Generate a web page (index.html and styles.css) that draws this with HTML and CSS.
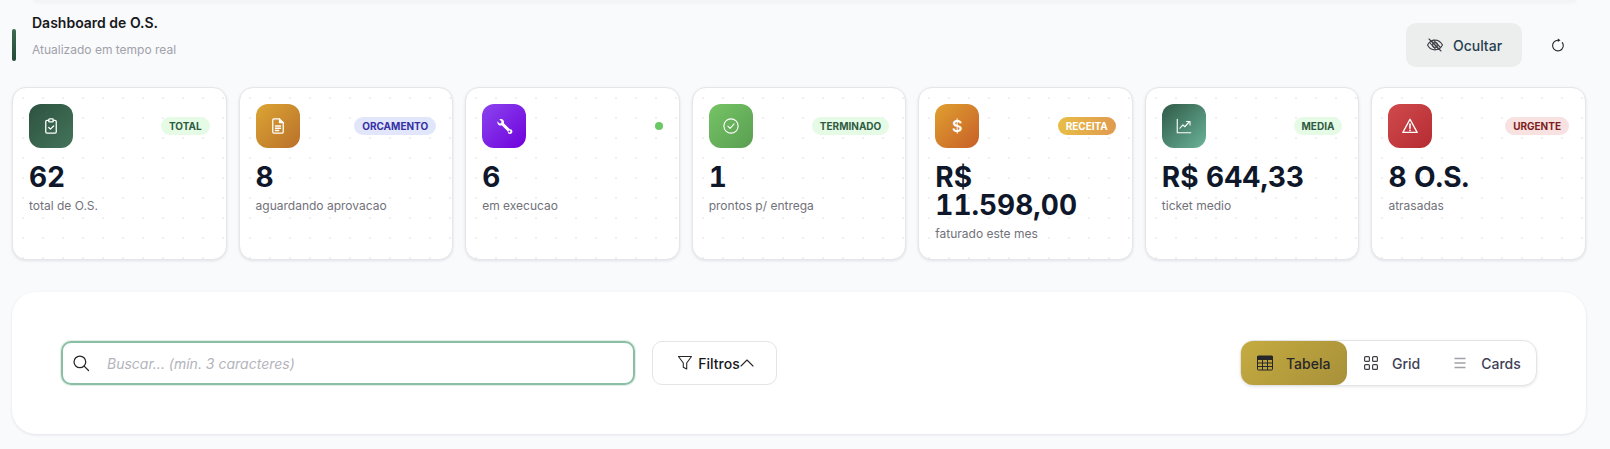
FILE: index.html
```html
<!DOCTYPE html>
<html lang="pt-BR">
<head>
<meta charset="utf-8">
<title>Dashboard de O.S.</title>
<link rel="stylesheet" href="styles.css">
</head>
<body>
<div class="topstrip"></div>
<main class="page">
  <header class="head">
    <div class="head-left">
      <span class="accent"></span>
      <div class="head-text">
        <h1>Dashboard de O.S.</h1>
        <p>Atualizado em tempo real</p>
      </div>
    </div>
    <div class="head-actions">
      <button class="btn-hide">
        <svg class="ico18" viewBox="0 0 24 24" fill="none" stroke="#3f3f46" stroke-width="1.5" stroke-linecap="round" stroke-linejoin="round"><path d="M2 12s3.600-6.500 10-6.500S22 12 22 12s-3.600 6.500-10 6.500S2 12 2 12z"/><circle cx="12" cy="12" r="3.200"/><path d="M4 4l16 16"/><path d="M7 6.500l10 11M10 5.500l9 9.500M5 9l8 9"/></svg>
        <span>Ocultar</span>
      </button>
      <button class="btn-refresh">
        <svg class="ico14" viewBox="0 0 14 14" fill="none" stroke="#27272a" stroke-width="1.100" stroke-linecap="round"><path d="M7 2.300A5.300 5.300 0 1 0 11.300 4.600"/><path d="M6.800.6l2.700 1.700-2.700 1.700z" fill="#27272a" stroke="none"/></svg>
      </button>
    </div>
  </header>

  <section class="cards">
    <article class="card">
      <div class="card-top">
        <div class="icon i-green"><svg viewBox="0 0 24 24" fill="none" stroke="#fff" stroke-width="1.700" stroke-linecap="round" stroke-linejoin="round"><path d="M9 4.500H6.500A1.500 1.500 0 0 0 5 6v14a1.500 1.500 0 0 0 1.500 1.500h11A1.500 1.500 0 0 0 19 20V6a1.500 1.500 0 0 0-1.500-1.500H15"/><rect x="9" y="2.500" width="6" height="4" rx="1"/><path d="M9 14l2.200 2.200L15.500 12"/></svg></div>
        <span class="tag t-green">TOTAL</span>
      </div>
      <div class="value">62</div>
      <div class="label">total de O.S.</div>
    </article>
    <article class="card">
      <div class="card-top">
        <div class="icon i-amber"><svg viewBox="0 0 24 24" fill="none" stroke="#fff" stroke-width="1.700" stroke-linecap="round" stroke-linejoin="round"><path d="M14 2.500H6.500A1.500 1.500 0 0 0 5 4v16a1.500 1.500 0 0 0 1.500 1.500h11A1.500 1.500 0 0 0 19 20V7.500z"/><path d="M14 2.500v5h5" fill="#fff"/><path d="M8.500 12h7M8.500 15h7M8.500 18h4.500"/></svg></div>
        <span class="tag t-indigo">ORCAMENTO</span>
      </div>
      <div class="value">8</div>
      <div class="label">aguardando aprovacao</div>
    </article>
    <article class="card">
      <div class="card-top">
        <div class="icon i-purple"><svg viewBox="0 0 24 24" fill="#fff" stroke="none"><path d="M3.200 5.700L6 8.500l2.300-.3.300-2.300-2.800-2.800c2-.9 4.300-.4 5.400 1.200.9 1.200 1.100 2.600.6 3.900l8 8a3.200 3.200 0 1 1-2.900 2.900l-8-8c-1.300.5-2.800.3-4-.6-1.500-1.100-2.100-3-1.700-4.800z"/><circle cx="19.200" cy="19.200" r="1.300" fill="#7a22e0"/></svg></div>
        <span class="dot"></span>
      </div>
      <div class="value">6</div>
      <div class="label">em execucao</div>
    </article>
    <article class="card">
      <div class="card-top">
        <div class="icon i-lime"><svg viewBox="0 0 24 24" fill="none" stroke="#fff" stroke-width="1.500" stroke-linecap="round" stroke-linejoin="round"><circle cx="12" cy="12" r="9.500"/><path d="M7.800 12.300l3 3 5.400-6"/></svg></div>
        <span class="tag t-green">TERMINADO</span>
      </div>
      <div class="value">1</div>
      <div class="label">prontos p/ entrega</div>
    </article>
    <article class="card">
      <div class="card-top">
        <div class="icon i-orange"><span class="glyph">$</span></div>
        <span class="tag t-gold">RECEITA</span>
      </div>
      <div class="value">R$ 11.598,00</div>
      <div class="label">faturado este mes</div>
    </article>
    <article class="card">
      <div class="card-top">
        <div class="icon i-teal"><svg viewBox="0 0 24 24" fill="none" stroke="#fff" stroke-width="1.500" stroke-linecap="round" stroke-linejoin="round"><path d="M3 3v18h18"/><path d="M6.500 15l4-4.500 2.500 2.500 6-6.500"/><path d="M15.500 6H20v4.500"/></svg></div>
        <span class="tag t-green">MEDIA</span>
      </div>
      <div class="value">R$ 644,33</div>
      <div class="label">ticket medio</div>
    </article>
    <article class="card">
      <div class="card-top">
        <div class="icon i-red"><svg viewBox="0 0 24 24" fill="none" stroke="#fff" stroke-width="1.800" stroke-linecap="round" stroke-linejoin="round"><path d="M12 3L2.500 20.500h19z"/><path d="M12 9.500v5.500" stroke-width="2.200"/><path d="M12 17.800v.1" stroke-width="2.400"/></svg></div>
        <span class="tag t-red">URGENTE</span>
      </div>
      <div class="value">8 O.S.</div>
      <div class="label">atrasadas</div>
    </article>
  </section>

  <section class="panel">
    <div class="search">
      <svg class="ico18 search-ico" viewBox="0 0 24 24" fill="none" stroke="#27272a" stroke-width="1.700" stroke-linecap="round"><circle cx="10.500" cy="10.500" r="7.800"/><path d="M16.200 16.200L22 22"/></svg>
      <span class="placeholder">Buscar... (mín. 3 caracteres)</span>
    </div>
    <button class="btn-filter">
      <svg class="ico16" viewBox="0 0 16 16" fill="none" stroke="#27272a" stroke-width="1.100" stroke-linejoin="round"><path d="M1.500 1.500h13L9.700 8v6l-3.400-1.800V8z"/></svg>
      <span>Filtros</span>
      <svg class="ico14" viewBox="0 0 14 14" fill="none" stroke="#27272a" stroke-width="1.100" stroke-linecap="round" stroke-linejoin="round"><path d="M1 10l6-6 6 6"/></svg>
    </button>
    <div class="views">
      <button class="view active">
        <svg class="ico16" viewBox="0 0 16 16" fill="none" stroke="#27272a" stroke-width="1"><rect x=".5" y="1" width="15" height="14" rx="1"/><path d="M.5 1.500h15v3h-15z" fill="#27272a"/><path d="M.5 8h15M.5 11.500h15M5.500 4.500V15M10.500 4.500V15"/></svg>
        <span>Tabela</span>
      </button>
      <button class="view">
        <svg class="ico16" viewBox="0 0 16 16" fill="none" stroke="#3f3f46" stroke-width="1.200"><rect x="1.600" y="1.600" width="4.800" height="4.800" rx="1"/><rect x="9.600" y="1.600" width="4.800" height="4.800" rx="1"/><rect x="1.600" y="9.600" width="4.800" height="4.800" rx="1"/><rect x="9.600" y="9.600" width="4.800" height="4.800" rx="1"/></svg>
        <span>Grid</span>
      </button>
      <button class="view view-last">
        <svg class="ico16" viewBox="0 0 16 16" fill="none" stroke="#a1a1aa" stroke-width="1.500"><path d="M2.500 3.500h11M2.500 8h11M2.500 12.500h11"/></svg>
        <span>Cards</span>
      </button>
    </div>
  </section>
</main>
</body>
</html>
```

FILE: styles.css
```css
* { box-sizing: border-box; }
html, body { margin: 0; padding: 0; }
body {
  width: 1610px;
  height: 449px;
  overflow: hidden;
  background: #f9fafc;
  font-family: "Inter", "Noto Sans", sans-serif;
  color: #0f172a;
}
button { font-family: inherit; border: 0; background: none; padding: 0; cursor: pointer; }
svg { display: block; flex: none; }
.ico14 { width: 14px; height: 14px; }
.ico16 { width: 16px; height: 16px; }
.ico18 { width: 18px; height: 18px; }

.topstrip {
  height: 2px;
  margin: 0 34px;
  background: #f3f4f5;
  border-radius: 0 0 8px 8px;
  box-shadow: 0 0 4px rgba(15, 23, 42, .07);
}
.page { width: 1586px; padding: 12px 0 0 12px; }

.head { display: flex; justify-content: space-between; align-items: flex-end; height: 53px; }
.head-left { display: flex; align-items: flex-start; gap: 16px; height: 100%; }
.accent {
  width: 4px; height: 32px; margin-top: 15px;
  border-radius: 2px;
  background: linear-gradient(180deg, #3d6b50, #234a36);
}
.head-text h1 { margin: 0; font-size: 14px; line-height: 18px; font-weight: 600; color: #18181b; }
.head-text p { margin: 9px 0 0; font-size: 12px; line-height: 18px; color: #a1a1aa; }
.head-actions { display: flex; align-items: center; gap: 14px; margin-right: 6px; }
.btn-hide {
  display: flex; align-items: center; gap: 9px;
  height: 44px; width: 116px; justify-content: center;
  border-radius: 10px;
  background: #eceeee;
  font-size: 14px; font-weight: 500; color: #27404f;
}
.btn-refresh { width: 44px; height: 44px; display: flex; align-items: center; justify-content: center; }

.cards {
  display: grid;
  grid-template-columns: repeat(7, 1fr);
  gap: 12px;
  margin-top: 20px;
}
.card {
  min-height: 172px;
  padding: 16px;
  border: 1px solid #e6e6ea;
  border-radius: 14px;
  background-color: #fff;
  background-image: radial-gradient(circle, #f0f0f2 1px, transparent 1.400px);
  background-size: 20px 20px;
  box-shadow: 0 1px 3px rgba(15, 23, 42, .1);
}
.card-top { display: flex; justify-content: space-between; align-items: center; margin-bottom: 15px; }
.icon {
  width: 44px; height: 44px;
  border-radius: 12px;
  display: flex; align-items: center; justify-content: center;
}
.icon svg { width: 18px; height: 18px; }
.glyph { color: #fff; font-size: 16px; font-weight: 600; }
.i-green { background: linear-gradient(135deg, #2d5240, #44745a); }
.i-amber { background: linear-gradient(135deg, #dca534, #b9702a); }
.i-purple { background: linear-gradient(135deg, #8b45ee, #6f00dc); }
.i-lime { background: linear-gradient(135deg, #75c465, #5a9e52); }
.i-orange { background: linear-gradient(135deg, #e0a030, #c75f28); }
.i-teal { background: linear-gradient(135deg, #2f5a47, #6bb39a); }
.i-red { background: linear-gradient(135deg, #d04a4c, #b52c32); }

.tag {
  height: 18px; padding: 0 8px;
  display: inline-flex; align-items: center;
  border-radius: 9px;
  font-size: 10px; font-weight: 700;
}
.t-green { background: #e6fbe6; color: #2f5a42; }
.t-indigo { background: #e1e6fb; color: #3730a3; }
.t-gold { background: linear-gradient(90deg, #e8bd45, #e09a50); color: #fff; }
.t-red { background: #f7e1e1; color: #7f1d1d; }
.dot { width: 8px; height: 8px; border-radius: 50%; background: #6cc765; }

.value {
  font-size: 28px; line-height: 28px; font-weight: 700; color: #0f172a;
  font-variant-numeric: tabular-nums;
}
.label { margin-top: 6px; font-size: 12px; line-height: 18px; color: #71717a; }

.panel {
  display: flex; align-items: center;
  margin-top: 32px;
  height: 142px;
  padding: 48px 49px;
  border-radius: 24px;
  background: #fff;
  box-shadow: 0 1px 3px rgba(15, 23, 42, .1);
}
.search {
  display: flex; align-items: center; gap: 17px;
  width: 574px; height: 44px;
  padding: 0 9px;
  border: 2px solid #8abfa5;
  border-radius: 10px;
  box-shadow: 0 0 0 1px rgba(138, 191, 165, .25);
}
.placeholder { font-size: 14px; font-style: italic; color: #b4b4bc; }
.btn-filter {
  display: flex; align-items: center; justify-content: center;
  width: 125px; height: 44px;
  margin-left: 17px;
  padding-left: 2px;
  border: 1px solid #e4e4e7;
  border-radius: 10px;
  background: #fff;
  font-size: 14px; font-weight: 500; color: #18181b;
}
.btn-filter span { margin-left: 5px; }
.views {
  display: flex; align-items: stretch;
  margin-left: auto;
  height: 46px; width: 297px;
  border: 1px solid #e4e4e7;
  border-radius: 14px;
  background: #fff;
  box-shadow: 0 1px 3px rgba(15, 23, 42, .1);
}
.view {
  display: flex; align-items: center; gap: 13px;
  padding: 0 16px;
  font-size: 14px; font-weight: 500; color: #3f3f56;
}
.view-last { flex: 1; padding-right: 0; }
.view.active {
  flex: none;
  width: 106px; border-radius: 12px;
  background: linear-gradient(135deg, #c4ab40, #a8903a);
  color: #27272a;
}
```
